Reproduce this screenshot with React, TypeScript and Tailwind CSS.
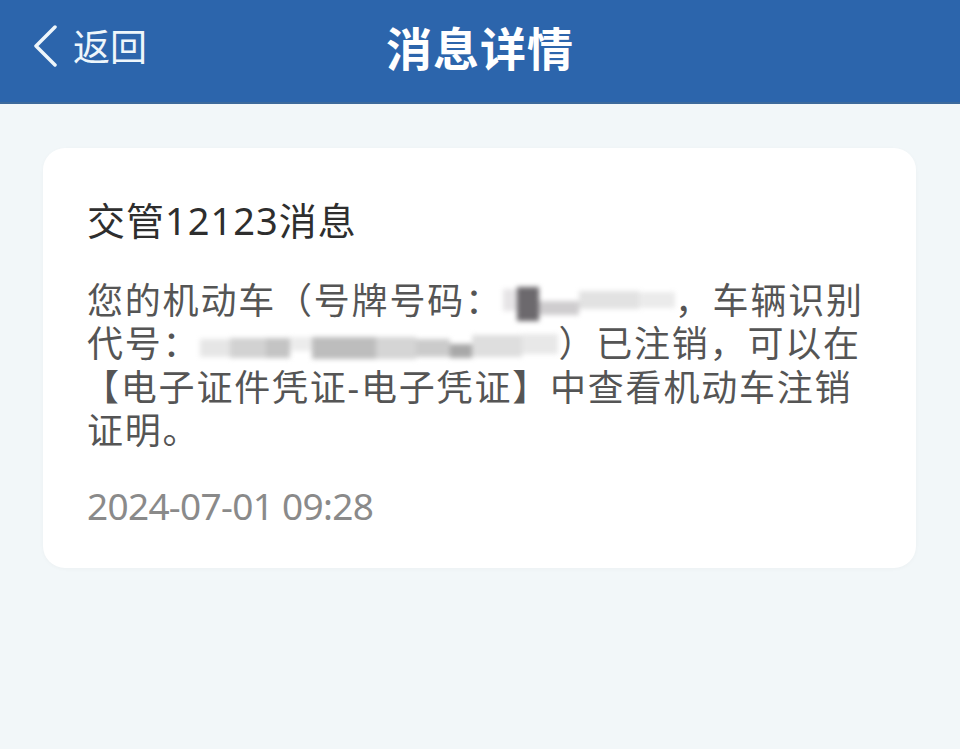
import React from "react";

const font = {
  fontFamily: '"Noto Sans", "Noto Sans CJK SC", sans-serif',
};

function Blur({
  width,
  blocks,
}: {
  width: number;
  blocks: { w: number; c: string; h?: number; y?: number }[];
}) {
  return (
    <span
      className="inline-flex items-center align-middle -mt-[8px]"
      style={{ width, height: 30, filter: "blur(2.5px)" }}
    >
      {blocks.map((b, i) => (
        <span
          key={i}
          className="inline-block shrink-0"
          style={{
            width: b.w,
            height: b.h ?? 22,
            background: b.c,
            marginTop: b.y ?? 0,
          }}
        />
      ))}
    </span>
  );
}

export default function App() {
  return (
    <div
      className="w-[960px] h-[749px] bg-[#f2f7f9] overflow-hidden"
      style={font}
    >
      {/* Header */}
      <div className="relative h-[104px] bg-[#2c65ac] flex items-center justify-center border-b-2 border-[#3d6a9c]">
        <div className="absolute left-[31px] top-0 h-full flex items-center gap-[14px] text-[#eef6fb] -mt-[5px]">
          <svg width="28" height="42" viewBox="0 0 28 42" fill="none">
            <path
              d="M24 2 L5 21 L24 40"
              stroke="#eef6fb"
              strokeWidth="3.5"
              strokeLinecap="round"
              strokeLinejoin="round"
            />
          </svg>
          <span className="text-[37px] leading-none">返回</span>
        </div>
        <h1 className="text-[46px] font-bold text-white leading-none tracking-[1px] -mt-[6px]">
          消息详情
        </h1>
      </div>

      {/* Card */}
      <div className="px-[43px] pt-[44px]">
        <div className="bg-white rounded-[22px] w-[873px] h-[420px] pl-[44px] pr-[20px] pt-[46px] shadow-[0_1px_4px_rgba(0,0,0,0.03)]">
          <h2 className="text-[38px] text-[#2e2e2e] leading-[52px] tracking-[1px]">
            交管12123消息
          </h2>
          <p className="mt-[33px] text-[36px] text-[#555555] leading-[43.3px] tracking-[1.8px] whitespace-nowrap">
            您的机动车（号牌号码：
            <Blur
              width={172}
              blocks={[
                { w: 14, c: "#e6e4e6" },
                { w: 22, c: "#6c696d", h: 34, y: 8 },
                { w: 40, c: "#cfcdcf", h: 14, y: 16 },
                { w: 60, c: "#e2e2e2", h: 18 },
                { w: 36, c: "#ebebeb", h: 16 },
              ]}
            />
            ，车辆识别
            <br />
            代号：
            <Blur
              width={358}
              blocks={[
                { w: 30, c: "#e6e6e6", h: 18, y: 8 },
                { w: 36, c: "#d2d2d2", h: 20, y: 8 },
                { w: 24, c: "#c4c4c4", h: 20, y: 8 },
                { w: 22, c: "#ececec", h: 14 },
                { w: 64, c: "#bdbdbd", h: 22, y: 8 },
                { w: 40, c: "#d5d5d5", h: 22, y: 8 },
                { w: 34, c: "#cbcbcb", h: 18, y: 8 },
                { w: 22, c: "#a8a8a8", h: 14, y: 14 },
                { w: 50, c: "#dedede", h: 22, y: 4 },
                { w: 36, c: "#e8e8e8", h: 20 },
              ]}
            />
            ）已注销，可以在
            <br />
            <span className="-ml-[4px]">【电子证件凭证-电子凭证】中查看机动车注销</span>
            <br />
            证明。
          </p>
          <p className="mt-[32px] text-[37px] text-[#8a8a8a] leading-[44px] tracking-[-0.7px]">
            2024-07-01 09:28
          </p>
        </div>
      </div>
    </div>
  );
}
